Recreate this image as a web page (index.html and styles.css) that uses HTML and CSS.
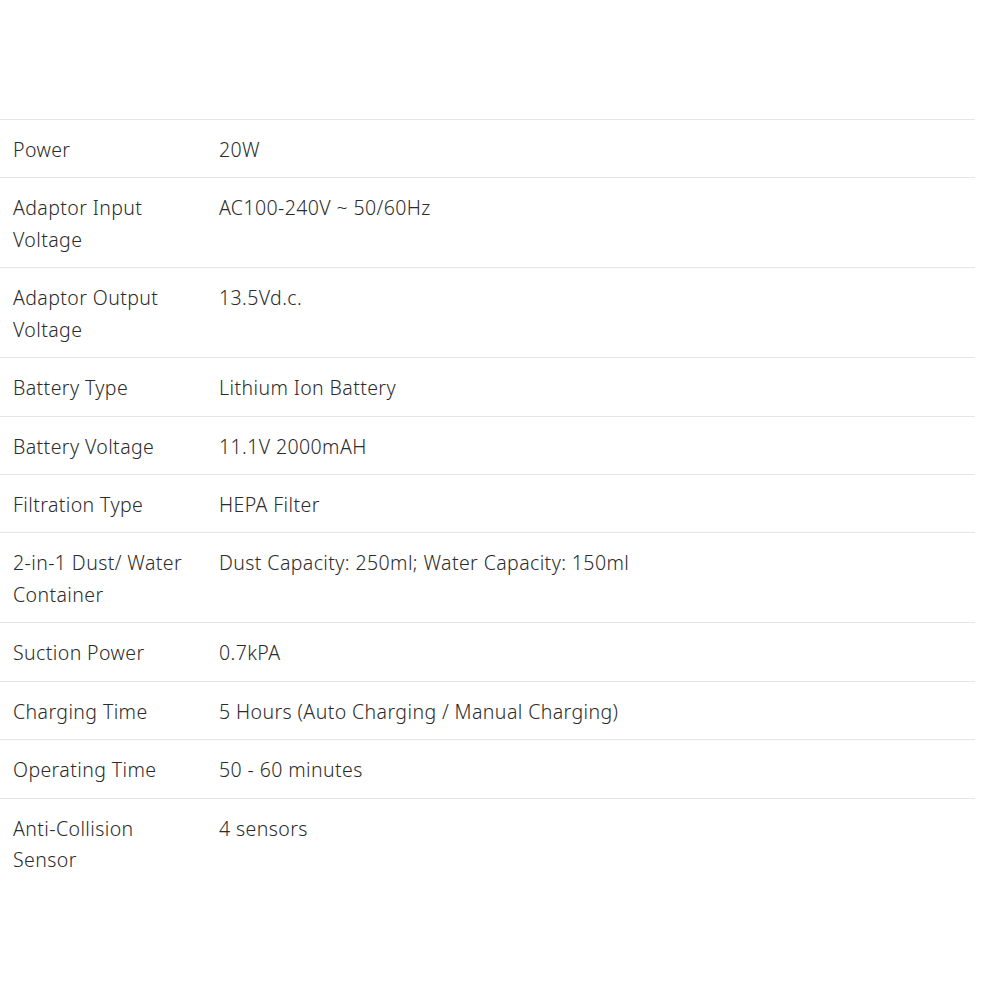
FILE: index.html
```html
<!DOCTYPE html>
<html lang="en">
<head>
    <meta charset="UTF-8">
    <meta name="viewport" content="width=device-width, initial-scale=1.0">
    <title>Specifications</title>
    <link rel="stylesheet" href="styles.css">
</head>
<body>
    <div class="specs">
        <table class="spec-table">
            <tbody>
                <tr><td>Power</td><td>20W</td></tr>
                <tr><td>Adaptor Input Voltage</td><td>AC100-240V ~ 50/60Hz</td></tr>
                <tr><td>Adaptor Output Voltage</td><td>13.5Vd.c.</td></tr>
                <tr><td>Battery Type</td><td>Lithium Ion Battery</td></tr>
                <tr><td>Battery Voltage</td><td>11.1V 2000mAH</td></tr>
                <tr><td>Filtration Type</td><td>HEPA Filter</td></tr>
                <tr><td>2-in-1 Dust/ Water Container</td><td>Dust Capacity: 250ml; Water Capacity: 150ml</td></tr>
                <tr><td>Suction Power</td><td>0.7kPA</td></tr>
                <tr><td>Charging Time</td><td>5 Hours (Auto Charging / Manual Charging)</td></tr>
                <tr><td>Operating Time</td><td>50 - 60 minutes</td></tr>
                <tr><td>Anti-Collision Sensor</td><td>4 sensors</td></tr>
            </tbody>
        </table>
    </div>
</body>
</html>
```

FILE: styles.css
```css
* {
    margin: 0;
    padding: 0;
    box-sizing: border-box;
}

body {
    background: #fff;
    font-family: 'Noto Sans', 'Lato', sans-serif;
    font-weight: 300;
    color: #2b2b2b;
}

.specs {
    width: 975px;
    padding-top: 119px;
}

.spec-table {
    width: 100%;
    border-collapse: collapse;
}

.spec-table td {
    border-top: 1px solid #e6e6e6;
    padding: 14px 13px 12.15px;
    font-size: 19.5px;
    letter-spacing: 0.4px;
    line-height: 31.33px;
    vertical-align: top;
}

.spec-table td:first-child {
    width: 206px;
}
```
